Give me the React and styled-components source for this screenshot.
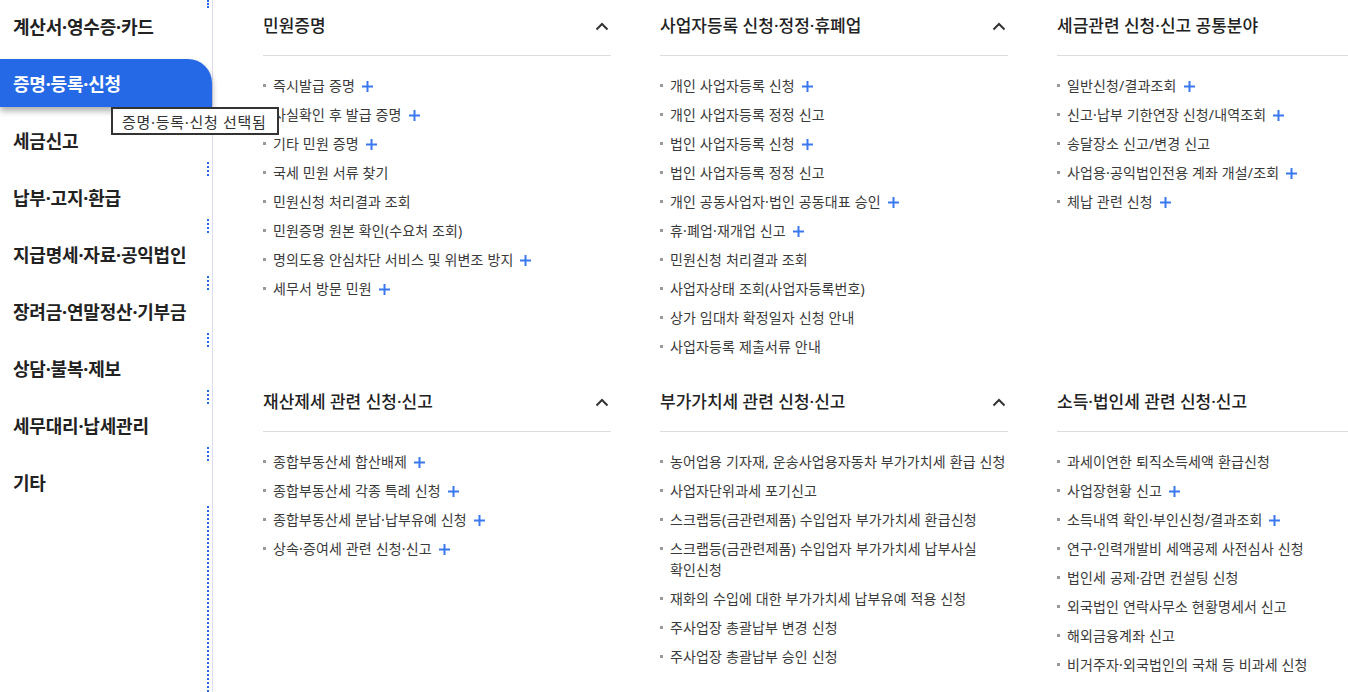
import React from "react";
import styled, { createGlobalStyle } from "styled-components";

const GlobalStyle = createGlobalStyle`
  * { box-sizing: border-box; }
  html, body { margin: 0; padding: 0; background: #fff; overflow: hidden; }
  body {
    font-family: "Noto Sans", "Noto Sans CJK KR", sans-serif;
    color: #333;
    word-break: keep-all;
  }
`;

const BLUE = "#2669e6";

const menu = [
    "계산서·영수증·카드",
    "증명·등록·신청",
    "세금신고",
    "납부·고지·환급",
    "지급명세·자료·공익법인",
    "장려금·연말정산·기부금",
    "상담·불복·제보",
    "세무대리·납세관리",
    "기타",
];

const ACTIVE = 1;

// [label, hasPlus]
const groups = [
    {
        title: "민원증명",
        items: [
            ["즉시발급 증명", true],
            ["사실확인 후 발급 증명", true],
            ["기타 민원 증명", true],
            ["국세 민원 서류 찾기"],
            ["민원신청 처리결과 조회"],
            ["민원증명 원본 확인(수요처 조회)"],
            ["명의도용 안심차단 서비스 및 위변조 방지", true],
            ["세무서 방문 민원", true],
        ],
    },
    {
        title: "사업자등록 신청·정정·휴폐업",
        items: [
            ["개인 사업자등록 신청", true],
            ["개인 사업자등록 정정 신고"],
            ["법인 사업자등록 신청", true],
            ["법인 사업자등록 정정 신고"],
            ["개인 공동사업자·법인 공동대표 승인", true],
            ["휴·폐업·재개업 신고", true],
            ["민원신청 처리결과 조회"],
            ["사업자상태 조회(사업자등록번호)"],
            ["상가 임대차 확정일자 신청 안내"],
            ["사업자등록 제출서류 안내"],
        ],
    },
    {
        title: "세금관련 신청·신고 공통분야",
        items: [
            ["일반신청/결과조회", true],
            ["신고·납부 기한연장 신청/내역조회", true],
            ["송달장소 신고/변경 신고"],
            ["사업용·공익법인전용 계좌 개설/조회", true],
            ["체납 관련 신청", true],
        ],
    },
    {
        title: "재산제세 관련 신청·신고",
        items: [
            ["종합부동산세 합산배제", true],
            ["종합부동산세 각종 특례 신청", true],
            ["종합부동산세 분납·납부유예 신청", true],
            ["상속·증여세 관련 신청·신고", true],
        ],
    },
    {
        title: "부가가치세 관련 신청·신고",
        items: [
            ["농어업용 기자재, 운송사업용자동차 부가가치세 환급 신청"],
            ["사업자단위과세 포기신고"],
            ["스크랩등(금관련제품) 수입업자 부가가치세 환급신청"],
            ["스크랩등(금관련제품) 수입업자 부가가치세 납부사실 확인신청"],
            ["재화의 수입에 대한 부가가치세 납부유예 적용 신청"],
            ["주사업장 총괄납부 변경 신청"],
            ["주사업장 총괄납부 승인 신청"],
        ],
    },
    {
        title: "소득·법인세 관련 신청·신고",
        items: [
            ["과세이연한 퇴직소득세액 환급신청"],
            ["사업장현황 신고", true],
            ["소득내역 확인·부인신청/결과조회", true],
            ["연구·인력개발비 세액공제 사전심사 신청"],
            ["법인세 공제·감면 컨설팅 신청"],
            ["외국법인 연락사무소 현황명세서 신고"],
            ["해외금융계좌 신고"],
            ["비거주자·외국법인의 국채 등 비과세 신청"],
        ],
    },
];

function Chevron() {
    return (
        <svg width="14" height="9" viewBox="0 0 14 9">
            <path d="M1.5 7.5 L7 2 L12.5 7.5" fill="none" stroke="#333" strokeWidth="2" />
        </svg>
    );
}

function Plus() {
    return (
        <PlusIcon width="11" height="11" viewBox="0 0 11 11">
            <path d="M5.5 0 V11 M0 5.5 H11" stroke="#3a78f0" strokeWidth="2" />
        </PlusIcon>
    );
}

function App() {
    return (
        <>
            <GlobalStyle />
            <Page>
                <Sidebar>
                    {menu.map((label, i) => (
                        <MenuItem
                            key={label}
                            $active={i === ACTIVE}
                            $dots={i !== ACTIVE && i - 1 !== ACTIVE}
                        >
                            {label}
                            {i === ACTIVE && <Tooltip>{label} 선택됨</Tooltip>}
                        </MenuItem>
                    ))}
                    <Filler />
                </Sidebar>

                <Content>
                    {groups.map((g) => (
                        <Group key={g.title}>
                            <GroupHead>
                                <h3>{g.title}</h3>
                                <Chevron />
                            </GroupHead>
                            <List>
                                {g.items.map(([label, plus]) => (
                                    <li key={label}>
                                        {label}
                                        {plus && <Plus />}
                                    </li>
                                ))}
                            </List>
                        </Group>
                    ))}
                </Content>
            </Page>
        </>
    );
}

const Page = styled.div`
    display: flex;
    min-height: 100vh;
    width: 1348px;
    overflow: hidden;
`;

const Sidebar = styled.nav`
    width: 213px;
    flex-shrink: 0;
    display: flex;
    flex-direction: column;
    padding-top: 2px;
    border-right: 1px solid #dcdcf2;
    position: relative;
    z-index: 2;
`;

const MenuItem = styled.div`
    position: relative;
    height: 48px;
    margin-bottom: 9px;
    padding-left: 13px;
    display: flex;
    align-items: center;
    font-size: 18px;
    font-weight: 700;
    letter-spacing: -0.2px;
    color: ${(p) => (p.$active ? "#fff" : "#222")};
    background: ${(p) => (p.$active ? BLUE : "transparent")};
    border-top-right-radius: ${(p) => (p.$active ? "24px" : "0")};
    box-shadow: ${(p) => (p.$active ? "0 4px 6px rgba(0,0,0,0.32)" : "none")};

    &::before {
        content: "";
        display: ${(p) => (p.$dots ? "block" : "none")};
        position: absolute;
        right: 3px;
        top: -11px;
        height: 14px;
        border-right: 2px dotted ${BLUE};
    }
    &:first-child::before {
        top: -2px;
        height: 8px;
    }
`;

const Tooltip = styled.span`
    position: absolute;
    left: 111px;
    top: 48px;
    height: 28px;
    padding: 0 10px 0 9px;
    display: flex;
    align-items: center;
    white-space: nowrap;
    background: #fff;
    border: 2px solid #333;
    color: #333;
    font-size: 15px;
    font-weight: 400;
    letter-spacing: 0.7px;
`;

const Filler = styled.div`
    flex: 1;
    margin-top: -9px;
    margin-right: 3px;
    border-right: 2px dotted ${BLUE};
`;

const Content = styled.main`
    flex: 1;
    padding-left: 50px;
    display: grid;
    grid-template-columns: repeat(3, 348px);
    column-gap: 49px;
    row-gap: 8px;
    align-content: start;
`;

const Group = styled.section`
    display: flex;
    flex-direction: column;
`;

const GroupHead = styled.div`
    display: flex;
    align-items: center;
    justify-content: space-between;
    padding: 14px 2px 17px 0;
    border-bottom: 1px solid #dcdcdc;

    h3 {
        margin: 0;
        font-size: 17px;
        line-height: 24px;
        font-weight: 500;
        color: #222;
        letter-spacing: 0;
    }
`;

const List = styled.ul`
    list-style: none;
    margin: 0;
    padding: 19px 0 3px;
    width: 354px;

    li {
        position: relative;
        padding-left: 10px;
        margin-bottom: 8px;
        font-size: 14px;
        line-height: 21px;
        color: #3a3a3a;
        letter-spacing: 0.15px;

        &::before {
            content: "";
            position: absolute;
            left: 0;
            top: 9px;
            width: 3px;
            height: 3px;
            background: #999;
        }
    }
`;

const PlusIcon = styled.svg`
    margin-left: 7px;
    vertical-align: -1px;
`;

export default App;
